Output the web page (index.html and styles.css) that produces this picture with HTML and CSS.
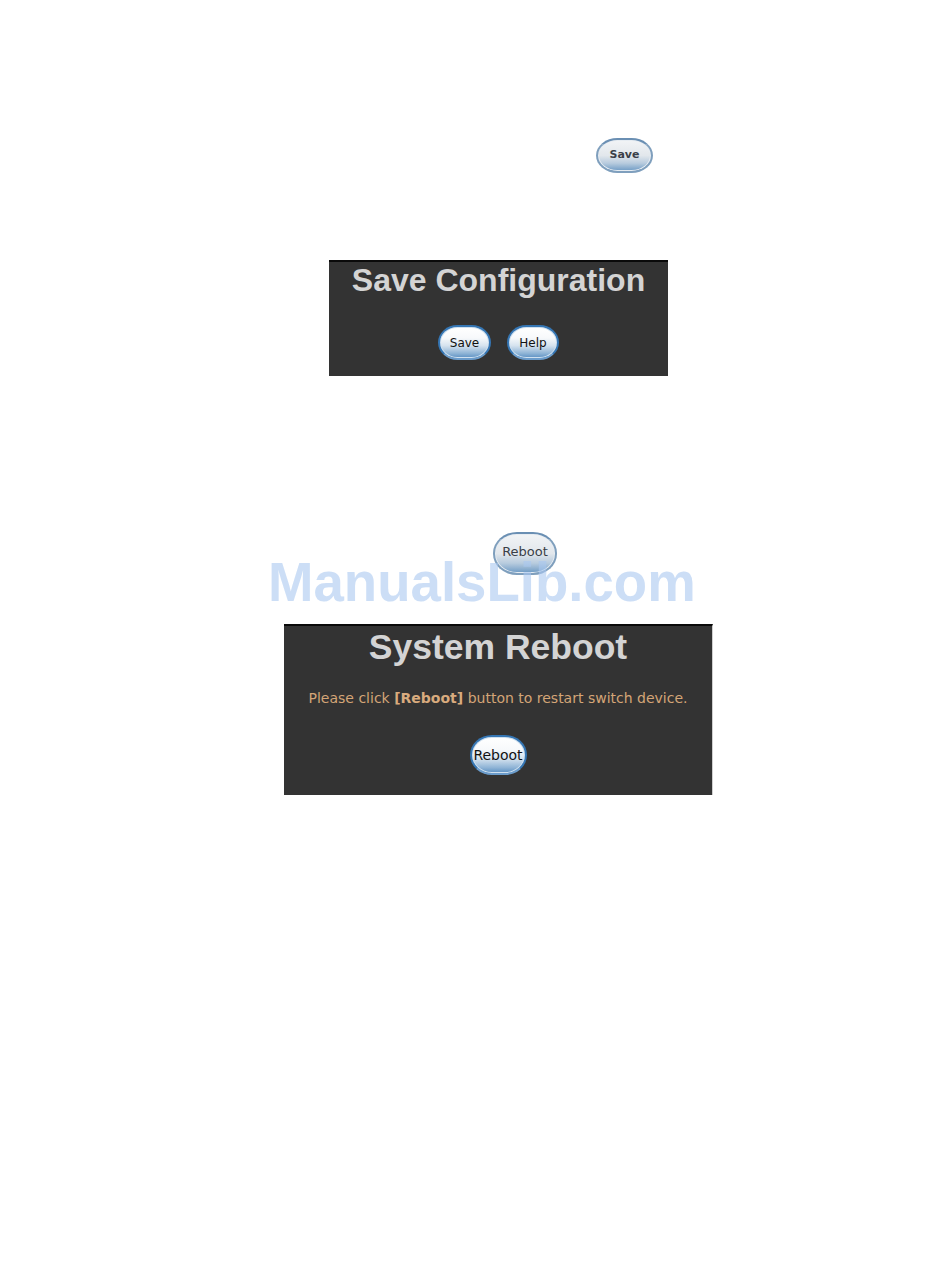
FILE: index.html
```html
<!DOCTYPE html>
<html>
<head>
<meta charset="utf-8">
<link rel="stylesheet" href="styles.css">
</head>
<body>
<div class="page">
  <div class="icon-row row-save">
    <span class="icon icon-save">Save</span>
  </div>

  <div class="panel panel-save">
    <h1 class="panel-title title-save">Save Configuration</h1>
    <div class="btn-row btn-row-save">
      <span class="btn btn-save">Save</span>
      <span class="btn btn-help">Help</span>
    </div>
  </div>

  <div class="icon-row row-reboot">
    <span class="icon icon-reboot">Reboot</span>
  </div>

  <div class="panel panel-reboot">
    <h1 class="panel-title title-reboot">System Reboot</h1>
    <p class="panel-msg">Please click <b>[Reboot]</b> button to restart switch device.</p>
    <div class="btn-row btn-row-reboot">
      <span class="btn btn-reboot">Reboot</span>
    </div>
  </div>

  <div class="watermark">ManualsLib.com</div>
</div>
</body>
</html>
```

FILE: styles.css
```css
html, body {
  margin: 0;
  padding: 0;
  background: #ffffff;
}

.page {
  position: relative;
  width: 950px;
  height: 1276px;
  font-family: "DejaVu Sans", Verdana, sans-serif;
}

.icon-row {
  display: flex;
}

.row-save {
  padding-top: 138px;
  padding-left: 596px;
}

.row-reboot {
  padding-top: 156px;
  padding-left: 493px;
}

.icon {
  display: flex;
  align-items: center;
  justify-content: center;
  box-sizing: border-box;
  border-radius: 22px / 18px;
  border: 2px solid #7f9fbd;
  border-top-color: #6a8fb3;
  background: linear-gradient(#f2f4f6 0%, #e2e7ec 50%, #b7cbde 75%, #6d9ac4 100%);
  color: #3a3f48;
  box-shadow: inset 0 0 0 1px #e6ecf2;
}

.icon-save {
  width: 57px;
  height: 35px;
  font-size: 11px;
  font-weight: bold;
  padding-bottom: 2px;
}

.icon-reboot {
  width: 64px;
  height: 43px;
  font-size: 13px;
  padding-bottom: 4px;
  border-radius: 24px / 21px;
}

.panel {
  box-sizing: border-box;
  background: #333333;
  border-top: 2px solid #0a0a0a;
  display: flex;
  flex-direction: column;
  align-items: center;
}

.panel-save {
  margin-top: 87px;
  margin-left: 329px;
  width: 339px;
  height: 116px;
  padding-top: 2px;
}

.panel-reboot {
  margin-top: 49px;
  margin-left: 284px;
  width: 429px;
  height: 171px;
  padding-top: 4px;
  border-right: 1px solid #cfcfcf;
}

.panel-title {
  margin: 0;
  font-family: "Liberation Sans", Arial, sans-serif;
  font-weight: bold;
  color: #d4d4d4;
  text-align: center;
}

.title-save {
  font-size: 32px;
  line-height: 32px;
}

.title-reboot {
  font-size: 35.5px;
  line-height: 35px;
}

.panel-msg {
  margin: 23px 0 0 0;
  font-size: 14px;
  line-height: 20px;
  color: #d4a577;
  white-space: nowrap;
}

.panel-msg b {
  color: #d9ab7e;
}

.btn-row {
  display: flex;
  gap: 16px;
}

.btn-row-save {
  margin-top: 29px;
}

.btn-row-reboot {
  margin-top: 27px;
}

.btn {
  display: flex;
  align-items: center;
  justify-content: center;
  box-sizing: border-box;
  border-radius: 20px / 18px;
  border: 2px solid #3576b4;
  border-bottom-color: #6b9ccb;
  background: linear-gradient(#ffffff 0%, #f7f9fb 35%, #d6e3ef 60%, #8fb4d6 85%, #5a8fc2 100%);
  color: #111111;
  box-shadow: inset 0 0 0 1px #cfe0ef;
}

.btn-save {
  width: 53px;
  height: 35px;
  font-size: 12px;
}

.btn-help {
  width: 52px;
  height: 35px;
  font-size: 12px;
}

.btn-reboot {
  width: 57px;
  height: 40px;
  font-size: 14px;
  border-radius: 22px / 20px;
}

.watermark {
  position: absolute;
  left: 268px;
  top: 553px;
  font-family: "Liberation Sans", Arial, sans-serif;
  font-weight: bold;
  font-size: 54.6px;
  line-height: 60px;
  color: rgba(170, 200, 240, 0.6);
  white-space: nowrap;
}
```
